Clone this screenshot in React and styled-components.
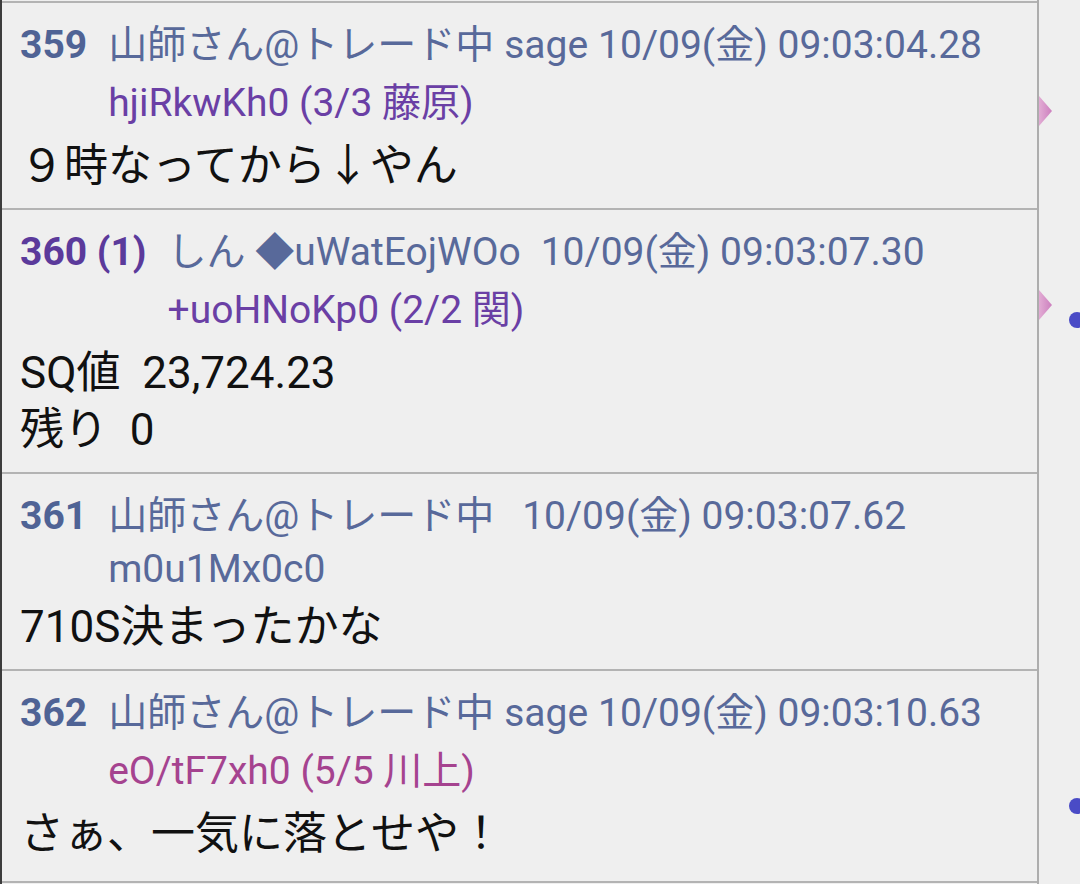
import styled, { createGlobalStyle } from "styled-components";

const GlobalStyle = createGlobalStyle`
  html, body {
    margin: 0;
    padding: 0;
    background: #efefef;
  }
  body {
    font-family: Roboto, "Noto Sans CJK JP", sans-serif;
  }
`;

const posts = [
  {
    num: "359",
    name: "山師さん@トレード中",
    mail: "sage",
    date: "10/09(金) 09:03:04.28",
    dateGap: 10,
    id: "hjiRkwKh0 (3/3 藤原)",
    idTone: "purple",
    tallId: true,
    body: ["９時なってから↓やん"],
  },
  {
    num: "360 (1)",
    numTone: "purple",
    name: "しん ◆uWatEojWOo",
    mail: "",
    date: "10/09(金) 09:03:07.30",
    dateGap: 20,
    id: "+uoHNoKp0 (2/2 関)",
    idTone: "purple",
    tallId: true,
    body: ["SQ値  23,724.23", "残り  0"],
  },
  {
    num: "361",
    name: "山師さん@トレード中",
    mail: "",
    date: "10/09(金) 09:03:07.62",
    dateGap: 28,
    id: "m0u1Mx0c0",
    idTone: "slate",
    tallId: false,
    body: ["710S決まったかな"],
  },
  {
    num: "362",
    name: "山師さん@トレード中",
    mail: "sage",
    date: "10/09(金) 09:03:10.63",
    dateGap: 10,
    id: "eO/tF7xh0 (5/5 川上)",
    idTone: "magenta",
    tallId: true,
    body: ["さぁ、一気に落とせや！"],
  },
];

const tones = {
  slate: "#58699a",
  purple: "#6a3fa5",
  magenta: "#a5438f",
};

function App() {
  return (
    <>
      <GlobalStyle />
      <Page>
        <Thread>
          {posts.map((p) => (
            <Post key={p.num}>
              <Header>
                <Num $tone={p.numTone}>{p.num}</Num>
                <Meta>
                  <TopLine>
                    <span>{p.name}</span>
                    {p.mail && <Mail>{p.mail}</Mail>}
                    <DateText $gap={p.dateGap}>{p.date}</DateText>
                  </TopLine>
                  <IdLine $tone={p.idTone} $tall={p.tallId}>
                    {p.id}
                  </IdLine>
                </Meta>
              </Header>
              <Body>
                {p.body.map((line) => (
                  <BodyLine key={line}>{line}</BodyLine>
                ))}
              </Body>
            </Post>
          ))}
        </Thread>
        <Gutter>
          <Arrow $top={96} />
          <Arrow $top={290} />
          <Dot $top={312} />
          <Dot $top={798} />
        </Gutter>
      </Page>
    </>
  );
}

const Page = styled.div`
  display: flex;
  min-height: 884px;
  background: #efefef;
`;

const Thread = styled.div`
  width: 1035px;
  flex: none;
  border-left: 2px solid #3c3c3c;
  border-right: 2px solid #adadad;
  padding-top: 1px;
`;

const Post = styled.div`
  border-top: 2px solid #b3b3b3;
  padding: 14px 0 13px 18px;

  &:last-child {
    padding-bottom: 18px;
    border-bottom: 2px solid #b3b3b3;
  }
`;

const Header = styled.div`
  display: flex;
  font-size: 39px;
  color: ${tones.slate};
  white-space: nowrap;
`;

const Num = styled.div`
  flex: none;
  font-weight: 700;
  line-height: 57px;
  margin-right: 21px;
  color: ${(p) => (p.$tone === "purple" ? "#5b3a9b" : "#4f6395")};
`;

const Meta = styled.div`
  display: flex;
  flex-direction: column;
`;

const TopLine = styled.div`
  line-height: 57px;
`;

const Mail = styled.span`
  margin-left: 10px;
`;

const DateText = styled.span`
  margin-left: ${(p) => p.$gap}px;
`;

const IdLine = styled.div`
  line-height: ${(p) => (p.$tall ? "58px" : "48px")};
  color: ${(p) => tones[p.$tone]};
`;

const Body = styled.div`
  margin-top: 6px;
  font-size: 44px;
  line-height: 57px;
  color: #111;
  white-space: pre;
`;

const BodyLine = styled.div``;

const Gutter = styled.div`
  position: relative;
  flex: 1;
  overflow: hidden;
`;

const Arrow = styled.div`
  position: absolute;
  left: 0;
  top: ${(p) => p.$top}px;
  width: 13px;
  height: 30px;
  clip-path: polygon(0 0, 100% 50%, 0 100%);
  background: linear-gradient(90deg, #e2acd4, #cc7fbe);
`;

const Dot = styled.div`
  position: absolute;
  left: 30px;
  top: ${(p) => p.$top}px;
  width: 16px;
  height: 16px;
  border-radius: 50%;
  background: #4a4bc6;
`;

export default App;
